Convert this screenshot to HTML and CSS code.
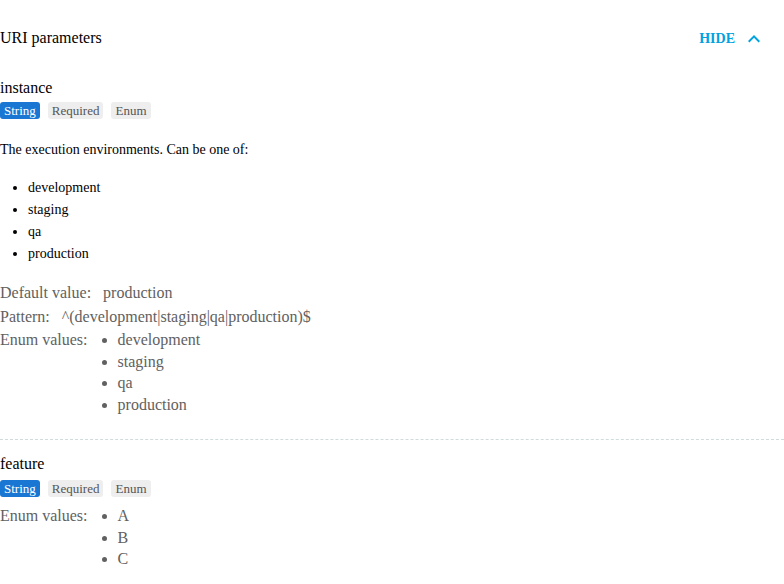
FILE: index.html
```html
<!DOCTYPE html>
<html>
<head>
<meta charset="utf-8">
<link rel="stylesheet" href="styles.css">
</head>
<body>
<div class="panel">
  <div class="header">
    <div class="title">URI parameters</div>
    <button class="toggle">HIDE
      <svg class="chev" viewBox="0 0 24 24" width="24" height="24"><path d="M7.41 15.41L12 10.83l4.59 4.58L18 14l-6-6-6 6z" fill="currentColor"/></svg>
    </button>
  </div>

  <div class="prop first">
    <div class="name">instance</div>
    <div class="badges">
      <span class="badge type">String</span>
      <span class="badge">Required</span>
      <span class="badge">Enum</span>
    </div>
    <p class="desc">The execution environments. Can be one of:</p>
    <ul class="desc-list">
      <li>development</li>
      <li>staging</li>
      <li>qa</li>
      <li>production</li>
    </ul>
    <div class="details">
      <div class="row"><span class="label">Default value:</span><span class="value">production</span></div>
      <div class="row"><span class="label">Pattern:</span><span class="value">^(development|staging|qa|production)$</span></div>
      <div class="row"><span class="label">Enum values:</span>
        <ul class="enum">
          <li>development</li>
          <li>staging</li>
          <li>qa</li>
          <li>production</li>
        </ul>
      </div>
    </div>
  </div>

  <div class="prop second">
    <div class="name">feature</div>
    <div class="badges">
      <span class="badge type">String</span>
      <span class="badge">Required</span>
      <span class="badge">Enum</span>
    </div>
    <div class="details">
      <div class="row"><span class="label">Enum values:</span>
        <ul class="enum">
          <li>A</li>
          <li>B</li>
          <li>C</li>
        </ul>
      </div>
    </div>
  </div>
</div>
</body>
</html>
```
FILE: styles.css
```css
html, body {
  margin: 0;
  padding: 0;
  background: #fff;
}
body {
  font-family: "Liberation Serif", "Times New Roman", serif;
  color: #000;
}
.header {
  display: flex;
  align-items: center;
  justify-content: space-between;
  height: 76px;
  padding-right: 18px;
}
.title {
  font-size: 16px;
  line-height: 20px;
}
.toggle {
  display: flex;
  align-items: center;
  gap: 7px;
  border: 0;
  background: transparent;
  padding: 1px 0 0;
  font-family: "Liberation Serif", serif;
  font-weight: bold;
  font-size: 14px;
  color: #00a2df;
  cursor: pointer;
}
.chev {
  display: block;
}
.prop {
  border-bottom: 1px dashed #d0dcdc;
}
.prop.first {
  margin-top: 2px;
  padding-bottom: 23px;
}
.prop.second {
  border-bottom: 0;
  margin-top: 14px;
}
.name {
  font-size: 16px;
  line-height: 20px;
}
.badges {
  display: flex;
  gap: 8px;
  margin-top: 4px;
}
.second .badges {
  margin-top: 6px;
}
.badge {
  font-size: 13px;
  line-height: 17px;
  padding: 0 4px;
  border-radius: 3px;
  background: #eeeeee;
  color: #555555;
}
.badge.type {
  background: #1976d2;
  color: #fff;
}
.desc {
  font-size: 14px;
  line-height: 18px;
  margin: 22px 0 0;
}
.desc-list {
  font-size: 14px;
  line-height: 22px;
  margin: 18px 0 0;
  padding-left: 28px;
}
.details {
  font-size: 16px;
  color: #616161;
  margin-top: 16px;
}
.second .details {
  margin-top: 7px;
}
.row {
  display: flex;
  align-items: flex-start;
  line-height: 23.5px;
}
.label {
  margin-right: 12px;
}
.enum {
  margin: 0;
  padding: 1px 0 0 18px;
  line-height: 21.7px;
}
```
